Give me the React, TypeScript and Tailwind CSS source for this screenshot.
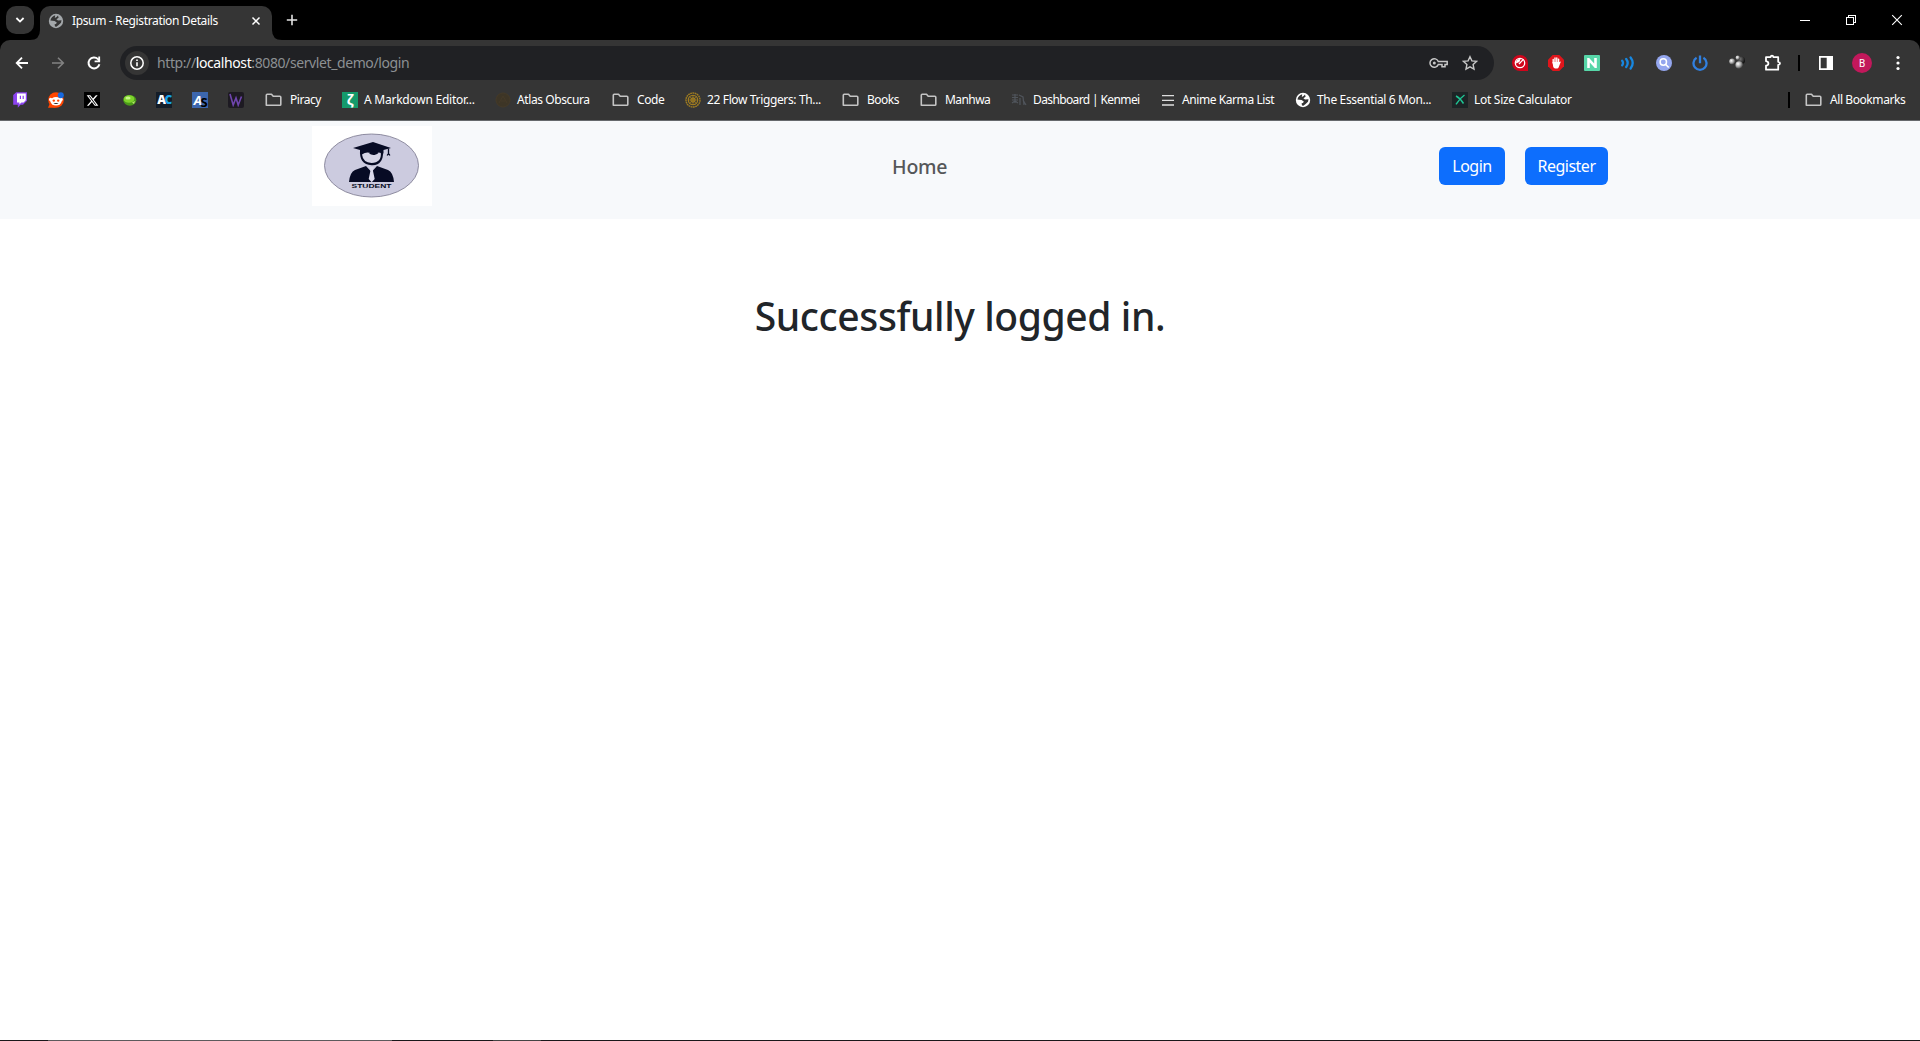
import React from "react";
import { FaXTwitter } from "react-icons/fa6";

const Globe = ({ color, bg, s = 16 }: { color: string; bg: string; s?: number }) => (
  <svg width={s} height={s} viewBox="0 0 16 16" className="block shrink-0">
    <circle cx="8" cy="8" r="7.2" fill={color} />
    <path d="M7.2 2.2C5 3 3 4.6 2.4 7.4L6.6 8 8.8 9.5 8 11 6.6 11.2 7 13.6 8.4 13.8 10.6 12 13 9.8 13.5 7.2 10 7.6 8.4 6.2 10.6 4.8 10 2.6 8.6 4 6.8 5Z" fill={bg} />
  </svg>
);

const Folder = () => (
  <svg width="17" height="16" viewBox="0 0 17 16" fill="none" stroke="#c4c4c4" strokeWidth="1.6" className="block shrink-0">
    <path d="M1.3 13.2V3.2q0-.9.9-.9h4.3l1.7 1.9h6.6q1 0 1 1v7.2q0 .9-.9.9H2.2q-.9 0-.9-.9z" strokeLinejoin="round" />
  </svg>
);

const Twitch = () => (
  <svg width="16" height="16" viewBox="0 0 16 16">
    <path d="M4.2.2H15v8.6l-4 4H8.6L5.8 15.8v-3H1.2V3z" fill="#8c44f0" />
    <path d="M5 1.4h8.8v6.8L11.6 10.4H9.4L7.4 12.4v-2H5z" fill="#fff" />
    <path d="M8.4 3.8v3.2M11.2 3.8v3.2" stroke="#8c44f0" strokeWidth="1.2" />
  </svg>
);

const Reddit = () => (
  <svg width="16" height="16" viewBox="0 0 16 16">
    <circle cx="8" cy="8" r="7.8" fill="#ff4500" />
    <path d="M0 15.8h8L2 11z" fill="#ff4500" />
    <ellipse cx="8" cy="9.2" rx="5.6" ry="4.2" fill="#fff" />
    <circle cx="2.6" cy="7.4" r="1.6" fill="#fff" />
    <circle cx="13.2" cy="7.4" r="1.6" fill="#fff" />
    <circle cx="5.8" cy="8.6" r="1.2" fill="#ff4500" />
    <circle cx="10.2" cy="8.6" r="1.2" fill="#ff4500" />
    <path d="M5.4 10.9q2.6 2.2 5.2 0z" fill="#222" />
    <circle cx="12.8" cy="3.2" r="3" fill="#1769e0" />
  </svg>
);

const Lime = () => (
  <svg width="16" height="16" viewBox="0 0 16 16" className="ml-[3px]">
    <ellipse cx="7.8" cy="8.3" rx="6.5" ry="5.4" fill="#4b9a1a" />
    <ellipse cx="7" cy="7" rx="5.4" ry="3.8" fill="#7ed32c" />
    <ellipse cx="6" cy="6" rx="2.6" ry="1.5" fill="#c9f48a" />
    <path d="M10 10.4l3-1.4-1 3z" fill="#b5e86b" />
  </svg>
);

const Markdown = () => <div className="flex size-4 shrink-0 items-center justify-center bg-[#159a6c] font-['Noto_Sans'] text-[14px] leading-4 font-bold text-white">ζ</div>;

const Atlas = () => (
  <svg width="16" height="16" viewBox="0 0 16 16" fill="none" stroke="#453a28" className="shrink-0">
    <circle cx="8" cy="8" r="7" fill="#3d3526" />
    <path d="M4 11L8 4l4 7M5.5 9h5" />
  </svg>
);

const Coin = () => (
  <svg width="16" height="16" viewBox="0 0 16 16" fill="none" stroke="#a07d20" className="shrink-0">
    <circle cx="8" cy="8" r="7" strokeWidth="1.4" strokeDasharray="1.8 .5" />
    <circle cx="8" cy="8" r="4.7" strokeWidth="1.3" />
    <circle cx="8" cy="8" r="2" strokeWidth="1.3" />
    <path d="M8 3v10M3 8h10M4.5 4.5l7 7M11.5 4.5l-7 7" strokeWidth=".7" />
  </svg>
);

const Kenmei = () => (
  <svg width="16" height="16" viewBox="0 0 16 16" fill="none" stroke="#50555c" className="shrink-0">
    <path d="M1 3h6M1 5.5h6M1 8h6M4 2v9M1 11l3-2 3 2M8 3l4 2 1 8M9 6v7M12 8l3 5" strokeWidth="1.2" />
  </svg>
);

const Lines = () => (
  <svg width="16" height="16" viewBox="0 0 16 16" stroke="#dedede" strokeWidth="1.3" className="shrink-0">
    <path d="M2 3.6h12M2 8.4h12M2 13h12" />
  </svg>
);

const Lot = () => (
  <svg width="16" height="16" viewBox="0 0 16 16" fill="none" className="shrink-0">
    <rect width="16" height="16" fill="#1d2426" />
    <path d="M4 4q4 2 7.5 7.5M12.5 3Q8 6 4 12.4" stroke="#1fc493" strokeWidth="1.5" />
  </svg>
);

const marks: { w: string; icon: React.ReactNode; text: string; t: string }[] = [
  { w: "w-[77px]", icon: <Folder />, text: "Piracy", t: "gap-2 tracking-[-0.47px]" },
  { w: "w-[153px]", icon: <Markdown />, text: "A Markdown Editor...", t: "gap-1.5 tracking-[-0.24px]" },
  { w: "w-[117px]", icon: <Atlas />, text: "Atlas Obscura", t: "gap-1.5 tracking-[-0.4px]" },
  { w: "w-[73px]", icon: <Folder />, text: "Code", t: "gap-2 tracking-[-0.37px]" },
  { w: "w-[157px]", icon: <Coin />, text: "22 Flow Triggers: Th...", t: "gap-1.5 tracking-[-0.36px]" },
  { w: "w-[78px]", icon: <Folder />, text: "Books", t: "gap-2 tracking-[-0.5px]" },
  { w: "w-[91px]", icon: <Folder />, text: "Manhwa", t: "gap-2 tracking-[-0.58px]" },
  { w: "w-[149px]", icon: <Kenmei />, text: "Dashboard | Kenmei", t: "gap-1.5 tracking-[-0.62px]" },
  { w: "w-[135px]", icon: <Lines />, text: "Anime Karma List", t: "gap-1.5 tracking-[-0.42px]" },
  { w: "w-[157px]", icon: <Globe color="#fff" bg="#353535" />, text: "The Essential 6 Mon...", t: "gap-1.5 tracking-[-0.35px]" },
  { w: "w-[336px]", icon: <Lot />, text: "Lot Size Calculator", t: "gap-1.5 tracking-[-0.29px]" },
];

const Cell = ({ children }: { children: React.ReactNode }) => (
  <div className="flex h-full w-9 shrink-0 items-center justify-center">{children}</div>
);

const TabStrip = () => (
  <div className="flex h-10 bg-black pl-1.5">
    <div className="mt-1.5 flex size-7 items-center justify-center rounded-[10px] bg-[#353535]">
      <svg width="10" height="8" viewBox="0 0 10 8" fill="none" stroke="#fff" strokeWidth="1.8"><path d="M1.4 2L5 5.6 8.6 2" /></svg>
    </div>
    <svg width="10" height="10" viewBox="0 0 10 10" className="-ml-1 mt-[30px]"><path d="M10 0v10H0Q10 10 10 0" fill="#353535" /></svg>
    <div className="mt-1.5 flex w-[232px] items-center rounded-t-[10px] bg-[#353535] pb-1 pl-2">
      <Globe color="#a3a7aa" bg="#353535" />
      <span className="ml-2 w-[170px] text-[12px] tracking-[-0.36px] whitespace-nowrap text-white">Ipsum - Registration Details</span>
      <svg width="16" height="16" viewBox="0 0 16 16" className="ml-1.5" stroke="#fff" strokeWidth="1.5"><path d="M4.5 4.5l7 7M11.5 4.5l-7 7" /></svg>
    </div>
    <svg width="10" height="10" viewBox="0 0 10 10" className="mt-[30px]"><path d="M0 0v10h10Q0 10 0 0" fill="#353535" /></svg>
    <svg width="12" height="12" viewBox="0 0 12 12" className="mt-[14px] ml-1" stroke="#e3e3e3" strokeWidth="1.6"><path d="M6 .8v10.4M.8 6h10.4" /></svg>
    <div className="ml-auto flex h-10 items-center pr-[17px]">
      <svg width="12" height="12" className="mr-[34px]" stroke="#fff" shapeRendering="crispEdges"><path d="M1 6.5h10" /></svg>
      <svg width="12" height="12" className="mr-[34px]" fill="none" stroke="#fff" shapeRendering="crispEdges"><path d="M1.5 3.5h7v7h-7zM3.5 3V1.5h7v7H9" /></svg>
      <svg width="12" height="12" stroke="#fff" strokeWidth="1.1"><path d="M1.2 1.2l9.6 9.6M10.8 1.2L1.2 10.8" /></svg>
    </div>
  </div>
);

const Toolbar = () => (
  <div className="flex h-10 items-center pt-1.5 pl-1">
    <Cell><svg width="16" height="16" viewBox="0 0 16 16" fill="none" stroke="#fff" strokeWidth="1.8"><path d="M14 8H3M8 2.7L2.7 8 8 13.3" /></svg></Cell>
    <Cell><svg width="16" height="16" viewBox="0 0 16 16" fill="none" stroke="#828282" strokeWidth="1.6"><path d="M2 8h11M8 2.7L13.3 8 8 13.3" /></svg></Cell>
    <Cell><svg width="16" height="16" viewBox="0 0 16 16" fill="none" stroke="#fff" strokeWidth="2"><path d="M13.4 9.3A5.5 5.5 0 1 1 12 4.1L13.6 5.8" /><path d="M13.2 1.6v4.8H8.6" strokeWidth="1.8" /></svg></Cell>
    <div className="ml-2 flex h-[34px] w-[1374px] shrink-0 items-center rounded-full bg-[#202124] pl-[5px]">
      <div className="flex size-6 items-center justify-center rounded-full bg-[#353535]">
        <svg width="16" height="16" viewBox="0 0 16 16" fill="none" stroke="#fff"><circle cx="8" cy="8" r="6.2" strokeWidth="1.5" /><path d="M8 7.2v4M8 4.5v1.5" strokeWidth="1.6" /></svg>
      </div>
      <span className="ml-2 pb-px text-[14px] tracking-[-0.4px] whitespace-nowrap text-[#8c9093]">http://<span className="text-white">localhost</span>:8080/servlet_demo/login</span>
      <svg width="20" height="12" viewBox="0 0 20 12" fill="none" stroke="#c7c7c7" strokeWidth="1.5" className="mr-[13px] ml-auto">
        <path d="M9.3 4.5A4.3 4.3 0 1 0 9.3 7.5H13v2.2h3V7.5h2.2v-3z" /><circle cx="5.3" cy="6" r="1.5" fill="#c7c7c7" stroke="none" />
      </svg>
      <svg width="16" height="16" viewBox="0 0 16 16" fill="none" stroke="#c7c7c7" strokeWidth="1.4" className="mr-4"><path d="M8 1.7l1.9 4.2 4.6.5-3.4 3.1.9 4.6L8 11.8 4 14.1l.9-4.6L1.5 6.4l4.6-.5z" /></svg>
    </div>
    <div className="ml-2 flex h-full items-center">
      <Cell>
        <svg width="16" height="16" viewBox="0 0 16 16"><circle cx="8" cy="8" r="8" fill="#d0051b" /><path d="M8 8h8v8H8z" fill="#d0051b" /><circle cx="8" cy="8" r="4.7" fill="none" stroke="#fff" strokeWidth="1.3" /><path d="M4 8.4A4 4 0 0 1 8.6 4L7.4 7z" fill="#fff" /><path d="M7 9l4.4-4.600" stroke="#fff" strokeWidth="1.3" /></svg>
      </Cell>
      <Cell>
        <svg width="16" height="16" viewBox="0 0 16 16"><path d="M4.7 0h6.6L16 4.7v6.6L11.3 16H4.7L0 11.3V4.7z" fill="#e0151b" /><path d="M5.2 8V4.4M7 7V3M8.8 7V3M10.6 8V4.2" stroke="#fff" strokeWidth="1.4" strokeLinecap="round" /><path d="M4.5 7h6.8l1.6-.4-2.2 5.6q-.5 1.2-1.6 1.2H7.2q-1.5 0-2-1.6z" fill="#fff" /></svg>
      </Cell>
      <Cell><div className="flex size-4 items-center justify-center rounded-[1px] bg-[#57d6a8]"><svg width="10" height="10" viewBox="0 0 10 10" fill="none" stroke="#fff" strokeWidth="2.6"><path d="M1.5 10V1.2L8.5 8.8V0" /></svg></div></Cell>
      <Cell><svg width="16" height="16" viewBox="0 0 16 16" fill="none" stroke="#1787e0" strokeWidth="2.3" strokeLinecap="round"><path d="M2.2 5.8q1.6 2.2 0 4.4M6.2 4q3 4 0 8M10.6 2.5q4.2 5.5 0 11" /></svg></Cell>
      <Cell><svg width="16" height="16" viewBox="0 0 16 16" fill="none"><circle cx="8" cy="8" r="8" fill="#94a6ee" /><circle cx="7.3" cy="7" r="3.2" stroke="#fff" strokeWidth="1.5" /><path d="M9.7 9.5l3 3" stroke="#fff" strokeWidth="1.7" /></svg></Cell>
      <Cell><svg width="16" height="16" viewBox="0 0 16 16" fill="none" stroke="#3180e0" strokeWidth="2.3"><path d="M4.6 2.8a6.5 6.5 0 1 0 6.8 0M8 .5v7.8" /></svg></Cell>
      <Cell>
        <svg width="16" height="16" viewBox="0 0 16 16" className="ml-0.5">
          <defs><radialGradient id="ball" cx=".35" cy=".35" r=".7"><stop offset="0" stopColor="#fff" /><stop offset=".5" stopColor="#aaa" /><stop offset="1" stopColor="#333" /></radialGradient><radialGradient id="dark" cx=".35" cy=".35" r=".7"><stop offset="0" stopColor="#777" /><stop offset="1" stopColor="#0a0a0a" /></radialGradient></defs>
          <circle cx="12.2" cy="5.2" r="3.8" fill="url(#dark)" /><circle cx="8.8" cy="2.8" r="2.2" fill="url(#ball)" /><circle cx="3.2" cy="6.6" r="3" fill="url(#ball)" /><circle cx="10.2" cy="10" r="3.8" fill="url(#ball)" />
        </svg>
      </Cell>
      <Cell><svg width="18" height="18" viewBox="0 0 18 18" fill="none" stroke="#fff" strokeWidth="1.8" strokeLinejoin="round" className="ml-0.5"><path d="M2 3.2h4.6q.2-1.6 1.4-1.6t1.4 1.6h4.8v4.6q1.8.1 1.8 1.5t-1.8 1.5v4.9H2v-4q2.4-.3 2.4-2.2T2 7.2z" /></svg></Cell>
      <div className="flex w-[18px] justify-center"><div className="h-4 w-0.5 bg-black" /></div>
      <Cell><svg width="16" height="16" viewBox="0 0 16 16" fill="#fff"><path d="M1 1h14v14H1zM2.7 2.7v10.6h6V2.7z" fillRule="evenodd" /></svg></Cell>
      <Cell><div className="flex size-5 items-center justify-center rounded-full bg-[#c2185b] font-['Roboto'] text-[10px] text-white">B</div></Cell>
      <Cell><svg width="4" height="16" viewBox="0 0 4 16" fill="#fff"><circle cx="2" cy="2.5" r="1.6" /><circle cx="2" cy="8" r="1.6" /><circle cx="2" cy="13.5" r="1.6" /></svg></Cell>
    </div>
  </div>
);

const Bookmarks = () => (
  <div className="flex h-10 items-center pl-0.5 text-[12px] leading-4 whitespace-nowrap text-white">
    <Cell><Twitch /></Cell>
    <Cell><Reddit /></Cell>
    <Cell><div className="flex size-4 items-center justify-center bg-black"><FaXTwitter size={13} /></div></Cell>
    <Cell><Lime /></Cell>
    <Cell><div className="flex size-4 items-center justify-center bg-[#141d28] font-['Open_Sans'] text-[12px] leading-4 font-extrabold tracking-[-1.5px]">A<span className="text-[#1aa3e8]">C</span></div></Cell>
    <Cell><div className="flex size-4 items-center justify-center bg-[#3c66ad] font-['Open_Sans'] text-[13px] leading-4 font-bold tracking-[-1.5px]"><i>A</i><span className="mt-1 text-black">S</span></div></Cell>
    <Cell><div className="flex size-4 items-center justify-center rounded-[2px] bg-[#1d1a22]"><svg width="14" height="14" viewBox="0 0 14 14" fill="none" stroke="#6f45ae" strokeWidth="1.6"><path d="M1 1l3.2 11L7 5l2.2 7L12.5 3.5" /></svg></div></Cell>
    <div className="ml-[11px] flex">
      {marks.map((m) => (
        <div key={m.text} className={`flex shrink-0 items-center ${m.w} ${m.t}`}>
          {m.icon}<span className="pb-px">{m.text}</span>
        </div>
      ))}
    </div>
    <div className="mr-[15px] h-4 w-0.5 shrink-0 bg-black" />
    <div className="flex items-center gap-2 tracking-[-0.42px]"><Folder /><span className="pb-px">All Bookmarks</span></div>
  </div>
);

const StudentLogo = () => (
  <svg width="120" height="80" viewBox="0 0 120 80" className="block bg-white">
    <ellipse cx="59.5" cy="39.5" rx="47" ry="31.5" fill="#cccbdf" stroke="#77758c" strokeWidth=".8" />
    <path d="M37 56q1-10 6-12l11-4 5.5 6 5.5-6 11 4q5 2 6 12z" fill="#070b24" />
    <path d="M48 24q-1 14.5 11.5 15.2T71 24z" fill="#070b24" />
    <path d="M50 28.5q4.5-3.5 9-1.2 5-2.3 9.8-.6 1 9.8-9.3 10.3-8.5-.5-9.5-8.5z" fill="#d6d5e6" />
    <path d="M57 27.5q2.5 1.8 5.5 1.4 3-.4 4.5-2.4l-5-1.5z" fill="#070b24" />
    <path d="M41 22l20-6 18 6-7.5 2v3.500q-11-4-23.500 0V24z" fill="#070b24" />
    <path d="M76.5 22.5V28M75.2 29.5q1.5-3 2.6 0" fill="none" stroke="#070b24" strokeWidth="1.3" />
    <path d="M57.5 41h4.2l-.8 3.5 1.8 8.5-3 3.2-3-3.2 1.8-8.5z" fill="#dad9ea" />
    <text x="59.5" y="61.5" textAnchor="middle" fontFamily="Liberation Sans" fontSize="5.5" fontWeight="700" textLength="40" lengthAdjust="spacingAndGlyphs" fill="#070b24">STUDENT</text>
  </svg>
);

export default function App() {
  return (
    <div className="flex h-[1041px] w-[1920px] flex-col overflow-hidden bg-white font-['Noto_Sans',sans-serif]">
      <header className="h-[121px] shrink-0 bg-black">
        <TabStrip />
        <div className="h-[81px] rounded-t-[10px] border-b border-[#66696c] bg-[#353535]">
          <Toolbar />
          <Bookmarks />
        </div>
      </header>
      <nav className="flex h-[98px] shrink-0 items-start bg-[#f7f9fb] pt-[5px] pl-[312px]">
        <StudentLogo />
        <a className="mt-[26px] ml-[460px] w-[547px] text-[19.5px] leading-[30px] font-medium tracking-[-0.2px] text-[#555759]">Home</a>
        <button className="mt-[21px] h-[38px] w-[66px] rounded-md bg-[#0d6efd] text-[16px] tracking-[-0.5px] text-white">Login</button>
        <button className="mt-[21px] ml-5 h-[38px] w-[83px] rounded-md bg-[#0d6efd] text-[16px] tracking-[-0.5px] text-white">Register</button>
      </nav>
      <main className="flex-1 pt-[73px] text-center">
        <h1 className="text-[39px] leading-[48px] font-medium tracking-[-0.4px] text-[#212529]">Successfully logged in.</h1>
      </main>
      <footer className="flex h-px shrink-0 bg-[#1a171a]">
        <div className="ml-[48px] h-px w-[344px] bg-[#5c5a5c]" />
        <div className="ml-[101px] h-px w-[48px] bg-[#444]" />
      </footer>
    </div>
  );
}
